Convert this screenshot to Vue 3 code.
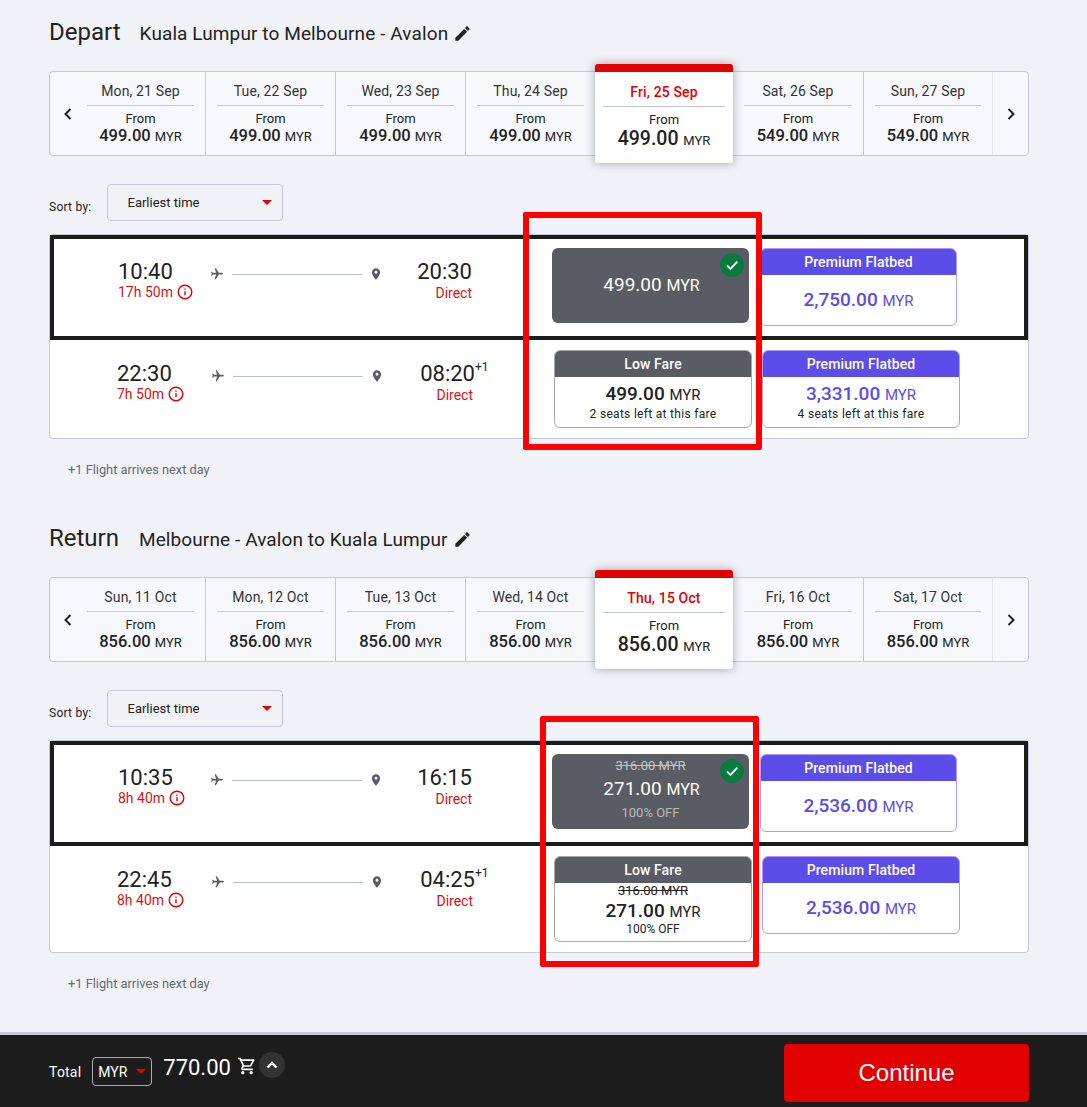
<script setup>
const plane = 'M21 16v-2l-8-5V3.5c0-.83-.67-1.5-1.5-1.5S10 2.67 10 3.5V9l-8 5v2l8-2.5V19l-2 1.5V22l3.5-1 3.5 1v-1.5L13 19v-5.5l8 2.5z';
const pin = 'M12 2C8.13 2 5 5.13 5 9c0 5.25 7 13 7 13s7-7.75 7-13c0-3.87-3.13-7-7-7zm0 9.5c-1.38 0-2.5-1.12-2.5-2.5s1.12-2.5 2.5-2.5 2.5 1.12 2.5 2.5-1.12 2.5-2.5 2.5z';
const pencil = 'M3 17.25V21h3.75L17.81 9.94l-3.75-3.75L3 17.25zM20.71 7.04c.39-.39.39-1.02 0-1.41l-2.34-2.34c-.39-.39-1.02-.39-1.41 0l-1.83 1.83 3.75 3.75 1.83-1.83z';
const cart = 'M15.55 13c.75 0 1.41-.41 1.75-1.03l3.58-6.49c.37-.66-.11-1.48-.87-1.48H5.21l-.94-2H1v2h2l3.6 7.59-1.35 2.44C4.52 15.37 5.48 17 7 17h12v-2H7l1.1-2h7.45zM6.16 6h12.15l-2.76 5H8.53L6.16 6zM7 18c-1.1 0-1.99.9-1.99 2S5.9 22 7 22s2-.9 2-2-.9-2-2-2zm10 0c-1.1 0-1.99.9-1.99 2s.89 2 1.99 2 2-.9 2-2-.9-2-2-2z';

const sections = [
  {
    title: 'Depart',
    route: 'Kuala Lumpur to Melbourne - Avalon',
    routeGap: 'routeWide',
    days: [
      ['Mon, 21 Sep', '499.00'],
      ['Tue, 22 Sep', '499.00'],
      ['Wed, 23 Sep', '499.00'],
      ['Thu, 24 Sep', '499.00'],
      ['Fri, 25 Sep', '499.00', true],
      ['Sat, 26 Sep', '549.00'],
      ['Sun, 27 Sep', '549.00'],
    ],
    flights: [
      {
        depart: '10:40',
        duration: '17h 50m',
        arrive: '20:30',
        selected: true,
        fare: { price: '499.00' },
        premium: { price: '2,750.00' },
      },
      {
        depart: '22:30',
        duration: '7h 50m',
        arrive: '08:20',
        nextDay: true,
        fare: { price: '499.00', note: '2 seats left at this fare' },
        premium: { price: '3,331.00', note: '4 seats left at this fare' },
      },
    ],
  },
  {
    title: 'Return',
    route: 'Melbourne - Avalon to Kuala Lumpur',
    routeGap: '',
    days: [
      ['Sun, 11 Oct', '856.00'],
      ['Mon, 12 Oct', '856.00'],
      ['Tue, 13 Oct', '856.00'],
      ['Wed, 14 Oct', '856.00'],
      ['Thu, 15 Oct', '856.00', true],
      ['Fri, 16 Oct', '856.00'],
      ['Sat, 17 Oct', '856.00'],
    ],
    flights: [
      {
        depart: '10:35',
        duration: '8h 40m',
        arrive: '16:15',
        selected: true,
        fare: { price: '271.00', was: '316.00 MYR', off: '100% OFF' },
        premium: { price: '2,536.00' },
      },
      {
        depart: '22:45',
        duration: '8h 40m',
        arrive: '04:25',
        nextDay: true,
        fare: { price: '271.00', was: '316.00 MYR', off: '100% OFF' },
        premium: { price: '2,536.00' },
      },
    ],
  },
];
</script>

<template>
  <div class="page">
    <section v-for="section in sections" :key="section.title" class="section">
      <header class="sectionHead">
        <h2 class="sectionTitle">{{ section.title }}</h2>
        <span class="sectionRoute" :class="section.routeGap">{{ section.route }}</span>
        <svg class="editIcon" viewBox="0 0 24 24"><path :d="pencil" /></svg>
      </header>

      <div class="strip">
        <div class="stripArrow stripArrowLeft">
          <svg viewBox="0 0 10 14"><path d="M7.5 2 2.5 7l5 5" /></svg>
        </div>
        <div
          v-for="day in section.days"
          :key="day[0]"
          class="day"
          :class="{ daySelected: day[2] }"
        >
          <div class="dayLabel">{{ day[0] }}</div>
          <div class="dayFrom">From</div>
          <div class="dayPrice">{{ day[1] }} <small>MYR</small></div>
        </div>
        <div class="stripArrow">
          <svg viewBox="0 0 10 14"><path d="M2.5 2l5 5-5 5" /></svg>
        </div>
      </div>

      <div class="sortRow">
        <span class="sortLabel">Sort by:</span>
        <div class="sortSelect">
          Earliest time
          <i class="caret"></i>
        </div>
      </div>

      <div class="flights">
        <div
          v-for="flight in section.flights"
          :key="flight.depart"
          class="flight"
          :class="{ flightSelected: flight.selected }"
        >
          <div class="departCol">
            <div class="time">{{ flight.depart }}</div>
            <div class="duration">
              {{ flight.duration }}
              <svg class="infoIcon" viewBox="0 0 16 16">
                <circle cx="8" cy="8" r="6.8" />
                <path d="M8 7.2v4M8 4.4v1.4" />
              </svg>
            </div>
          </div>
          <div class="routeCol">
            <svg class="planeIcon" viewBox="0 0 24 24"><path :d="plane" transform="rotate(90 12 12)" /></svg>
            <span class="routeLine"></span>
            <svg class="pinIcon" viewBox="0 0 24 24"><path :d="pin" /></svg>
          </div>
          <div class="arriveCol">
            <div class="time arriveTime" :class="{ arriveTimeNext: flight.nextDay }">
              {{ flight.arrive }}<sup v-if="flight.nextDay" class="nextDay">+1</sup>
            </div>
            <div class="direct">Direct</div>
          </div>

          <div class="fares">
            <div v-if="flight.selected" class="fare fareChosen">
              <div v-if="flight.fare.was" class="chosenWas">{{ flight.fare.was }}</div>
              <div class="chosenPrice">{{ flight.fare.price }} <small>MYR</small></div>
              <div v-if="flight.fare.off" class="chosenOff">{{ flight.fare.off }}</div>
              <span class="chosenCheck">
                <svg viewBox="0 0 24 24"><path d="M6.5 12.5l3.8 3.8 7.5-8" /></svg>
              </span>
            </div>
            <div v-else class="fare fareLow">
              <div class="fareHead">Low Fare</div>
              <div class="fareBody" :class="{ fareBodyPromo: flight.fare.was }">
                <div v-if="flight.fare.was" class="fareWas">{{ flight.fare.was }}</div>
                <div class="farePrice">{{ flight.fare.price }} <small>MYR</small></div>
                <div v-if="flight.fare.note" class="fareNote">{{ flight.fare.note }}</div>
                <div v-if="flight.fare.off" class="fareOff">{{ flight.fare.off }}</div>
              </div>
            </div>

            <div class="fare farePremium">
              <div class="fareHead">Premium Flatbed</div>
              <div class="fareBody">
                <div class="farePrice">{{ flight.premium.price }} <small>MYR</small></div>
                <div v-if="flight.premium.note" class="fareNote">{{ flight.premium.note }}</div>
              </div>
            </div>
          </div>
        </div>
      </div>

      <p class="footnote">+1 Flight arrives next day</p>
    </section>

    <div class="markup markupDepart"></div>
    <div class="markup markupReturn"></div>

    <footer class="totalBar">
      <span class="totalLabel">Total</span>
      <div class="currency">MYR <i class="caret"></i></div>
      <span class="totalPrice">770.00</span>
      <svg class="cartIcon" viewBox="0 0 24 24"><path :d="cart" /></svg>
      <span class="totalToggle">
        <svg viewBox="0 0 14 10"><path d="M2.5 7.5 7 3l4.5 4.5" /></svg>
      </span>
      <button type="button" class="continueButton">Continue</button>
    </footer>
  </div>
</template>

<style>
body {
  background: #f0f2f7;
}
</style>

<style scoped>
.page {
  color: #222;
  font-family: Roboto, 'Liberation Sans', sans-serif;
  height: 1107px;
  overflow: hidden;
  padding-top: 17px;
  position: relative;
}

.section {
  margin: 0 58px 45px 49px;
}

.sectionHead {
  align-items: center;
  display: flex;
  height: 30px;
}

.sectionTitle {
  font-size: 24px;
  font-weight: 400;
  margin: 0;
}

.sectionRoute {
  font-size: 19px;
  letter-spacing: 0.1px;
  margin-left: 20px;
  padding-top: 2px;
}

.routeWide {
  margin-left: 19px;
}

.editIcon {
  fill: #222;
  height: 19px;
  margin: 2px 0 0 5px;
  width: 19px;
}

.strip {
  background: #f7f8fc;
  border: 1px solid #c5c9d6;
  border-radius: 4px;
  box-sizing: border-box;
  display: flex;
  height: 85px;
  margin-top: 24px;
}

.stripArrow {
  align-items: center;
  display: flex;
  flex: 1;
  justify-content: center;
}

.stripArrow svg {
  fill: none;
  height: 14px;
  stroke: #222;
  stroke-width: 2;
  width: 10px;
}

.stripArrowLeft {
  box-sizing: border-box;
  flex: 0 0 26px;
  justify-content: flex-end;
  padding-right: 3px;
}

.day {
  border-right: 1px solid #c5c9d6;
  box-sizing: border-box;
  flex: 0 0 130px;
  padding: 0 11px;
  text-align: center;
}

.dayLabel {
  border-bottom: 1px solid #c5c9d6;
  color: #333;
  font-size: 14px;
  height: 33px;
  letter-spacing: 0.15px;
  line-height: 38px;
}

.dayFrom {
  font-size: 13px;
  line-height: 15px;
  margin-top: 5px;
}

.dayPrice {
  font-size: 16.5px;
  font-weight: 500;
  line-height: 20px;
}

.dayPrice small {
  font-size: 13px;
  font-weight: 400;
}

.day:nth-last-child(3) {
  border-right: none;
}

.day:nth-last-child(2) {
  border-left: 1px solid #c5c9d6;
  border-right: 1px solid #e4e6ee;
}

.daySelected {
  background: #fff;
  border: none;
  border-radius: 3px;
  border-top: 8px solid #e30000;
  box-shadow: 0 0 10px rgba(60, 65, 85, 0.45);
  flex-basis: 138px;
  height: 99px;
  margin: -8px 0 0 -1px;
  padding: 0 8px;
  position: relative;
}

.daySelected .dayLabel {
  color: #e30000;
  font-weight: 500;
  height: 34px;
  line-height: 40px;
}

.daySelected .dayPrice {
  font-size: 19.5px;
  line-height: 24px;
}

.sortRow {
  align-items: flex-end;
  display: flex;
  margin-top: 28px;
}

.sortLabel {
  font-size: 12px;
  letter-spacing: 0.25px;
  line-height: 16px;
  margin-right: 15px;
  padding-bottom: 6px;
}

.sortSelect {
  align-items: center;
  border: 1px solid #c5c9d6;
  border-radius: 4px;
  box-sizing: border-box;
  display: flex;
  font-size: 13px;
  height: 37px;
  justify-content: space-between;
  padding: 0 10px 0 20px;
  width: 176px;
}

.caret {
  border-left: 5px solid transparent;
  border-right: 5px solid transparent;
  border-top: 5px solid #e30000;
  height: 0;
  width: 0;
}

.flights {
  background: #fff;
  border: 1px solid #c5c9d6;
  border-radius: 4px;
  margin-top: 13px;
}

.flight {
  align-items: flex-start;
  box-sizing: border-box;
  display: flex;
  min-height: 98px;
  padding: 20px 0 10px 67px;
}

.flightSelected {
  border: 4px solid #1c1c1c;
  height: 105px;
  padding: 19px 0 0 64px;
}

.departCol {
  flex: 0 0 95px;
}

.flightSelected .departCol {
  flex-basis: 93px;
}

.time {
  font-size: 22px;
  line-height: 26px;
  padding-top: 1px;
}

.duration {
  align-items: center;
  color: #d81313;
  display: flex;
  font-size: 14px;
  gap: 4px;
  height: 16px;
  margin-top: -1px;
}

.infoIcon {
  fill: none;
  height: 16px;
  stroke: #e30000;
  stroke-width: 1.4;
  width: 16px;
}

.routeCol {
  align-items: center;
  display: flex;
  flex: 0 0 171px;
  height: 26px;
  margin-top: 3px;
}

.planeIcon,
.pinIcon {
  fill: #5a5c63;
  height: 14px;
  margin: 0 -1px;
  width: 14px;
}

.routeLine {
  background: #b9bece;
  flex: 1;
  height: 1px;
  margin: 0 8px 0 9px;
}

.arriveCol {
  flex: 0 0 90px;
  text-align: right;
}

.arriveTime {
  position: relative;
}

.arriveTimeNext {
  margin-right: -2px;
}

.nextDay {
  font-size: 12px;
  left: 100%;
  line-height: 12px;
  position: absolute;
  top: 1px;
}

.direct {
  color: #d81313;
  font-size: 14px;
  line-height: 16px;
}

.fares {
  display: flex;
  gap: 10px;
  margin: -10px 0 0 81px;
}

.flightSelected .fares {
  gap: 11px;
  margin: -10px 0 0 80px;
}

.fare {
  border-radius: 6px;
  box-sizing: border-box;
  overflow: hidden;
  text-align: center;
  width: 198px;
}

.flightSelected .fare {
  width: 197px;
}

.fareChosen {
  align-items: center;
  background: #5a5c63;
  color: #fff;
  display: flex;
  flex-direction: column;
  height: 75px;
  justify-content: center;
  overflow: visible;
  padding-bottom: 1px;
  position: relative;
}

.chosenWas {
  color: #c2c4c9;
  font-size: 13px;
  line-height: 14px;
  margin-bottom: 3px;
  text-decoration: line-through;
}

.chosenPrice {
  font-size: 19px;
  line-height: 26px;
  padding-left: 2px;
}

.chosenPrice small {
  font-size: 16px;
}

.chosenOff {
  color: #b8bac0;
  font-size: 13px;
  line-height: 20px;
}

.chosenCheck {
  align-items: center;
  background: #0b7a3e;
  border-radius: 50%;
  display: flex;
  height: 24px;
  justify-content: center;
  position: absolute;
  right: 5px;
  top: 5px;
  width: 24px;
}

.chosenCheck svg {
  fill: none;
  height: 22px;
  stroke: #fff;
  stroke-width: 2;
  width: 22px;
}

.fareLow,
.farePremium {
  background: #fff;
  border: 1px solid #a8a8ad;
}

.farePremium {
  border-color: #a99cf5;
  height: 78px;
}

.fareHead {
  background: #5a5c63;
  color: #fff;
  font-size: 14px;
  font-weight: 500;
  height: 26px;
  letter-spacing: 0.1px;
  line-height: 26px;
}

.farePremium .fareHead {
  background: #5c4ce8;
}

.fareBody {
  align-items: center;
  box-sizing: border-box;
  display: flex;
  flex-direction: column;
  justify-content: center;
  min-height: 49px;
  padding-top: 1px;
}

.fareBodyPromo {
  justify-content: flex-start;
  padding-bottom: 5px;
}

.farePrice {
  font-size: 19px;
  font-weight: 500;
  line-height: 22px;
}

.farePrice small {
  font-size: 15px;
  font-weight: 400;
}

.farePremium .farePrice {
  color: #5c4ce8;
}

.fareNote {
  font-size: 12px;
  letter-spacing: 0.3px;
  line-height: 14px;
  margin-top: 1px;
}

.fareWas {
  font-size: 13px;
  line-height: 14px;
  text-decoration: line-through;
}

.fareBodyPromo .farePrice {
  margin-top: 2px;
}

.fareOff {
  font-size: 12px;
  line-height: 14px;
  margin-top: -1px;
}

.footnote {
  color: #666a73;
  font-size: 12.8px;
  line-height: 16px;
  margin: 23px 0 0 19px;
}

.markup {
  border: 6px solid #f00;
  border-radius: 2px;
  box-sizing: border-box;
  pointer-events: none;
  position: absolute;
}

.markupDepart {
  height: 238px;
  left: 523px;
  top: 212px;
  width: 239px;
}

.markupReturn {
  height: 251px;
  left: 540px;
  top: 716px;
  width: 219px;
}

.totalBar {
  align-items: center;
  background: #1c1c1c;
  border-top: 3px solid #c8cbd6;
  box-sizing: content-box;
  color: #fff;
  display: flex;
  height: 73px;
  margin-top: -5px;
  padding: 0 58px 0 49px;
}

.totalLabel {
  font-size: 14px;
  letter-spacing: 0.2px;
  padding-top: 1px;
}

.currency {
  align-items: center;
  border: 1px solid #a8abb3;
  border-radius: 4px;
  box-sizing: border-box;
  display: flex;
  font-size: 14px;
  height: 29px;
  justify-content: space-between;
  margin: 0 11px 0 11px;
  padding: 0 5px;
  width: 60px;
}

.totalPrice {
  font-size: 22px;
  margin-top: -8px;
}

.cartIcon {
  fill: #fff;
  height: 20px;
  margin: -12px 0 0 6px;
  width: 20px;
}

.totalToggle {
  align-items: center;
  background: #333;
  border-radius: 50%;
  display: flex;
  height: 26px;
  justify-content: center;
  margin: -13px 0 0 2px;
  width: 26px;
}

.totalToggle svg {
  fill: none;
  height: 10px;
  stroke: #fff;
  stroke-width: 2.4;
  width: 14px;
}

.continueButton {
  background: #e30000;
  border: none;
  border-radius: 4px;
  color: #fff;
  font-family: 'Liberation Sans', Arial, sans-serif;
  font-size: 24px;
  height: 58px;
  margin-left: auto;
  margin-top: 2px;
  width: 245px;
}
</style>
